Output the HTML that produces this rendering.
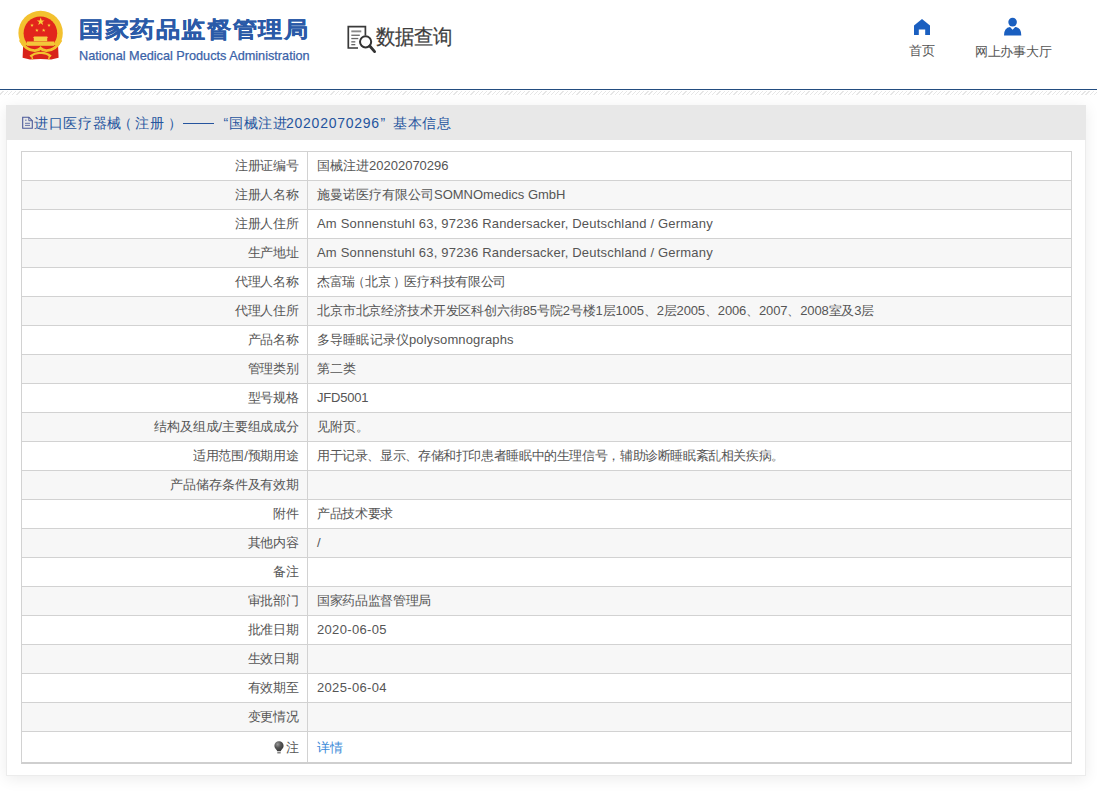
<!DOCTYPE html>
<html><head><meta charset="utf-8">
<style>
*{margin:0;padding:0;box-sizing:border-box}
html,body{width:1097px;height:792px;overflow:hidden;background:#fff;font-family:"Liberation Sans",sans-serif}
.abs{position:absolute}
#hdr{position:absolute;left:0;top:0;width:1097px;height:89px;background:#fff}
#bline{position:absolute;left:0;top:89px;width:1097px;height:1px;background:#234d80}
#hatch{position:absolute;left:0;top:91px;width:1097px;height:4px;
 background:repeating-linear-gradient(-45deg,#fff 0,#fff 1.6px,#e6e6e6 1.6px,#e6e6e6 2.5px,#fff 2.5px,#fff 3px)}
#title{position:absolute;left:79px;top:16px;font-size:24.5px;letter-spacing:0.6px;font-weight:bold;color:#2a5aa8;-webkit-text-stroke:0.3px #2a5aa8;white-space:nowrap;line-height:30px;transform:scaleY(0.91);transform-origin:0 0}
#sub{position:absolute;left:79px;top:47.5px;font-size:12.7px;color:#3a62a8;-webkit-text-stroke:0.25px #3a62a8;white-space:nowrap;line-height:16px}
#sjcx{position:absolute;left:376px;top:23px;font-size:19px;transform:scaleY(1.08);transform-origin:0 0;color:#3d3d3d;-webkit-text-stroke:0.2px #3d3d3d;white-space:nowrap;line-height:26px}
.nav{position:absolute;font-size:13px;color:#555;white-space:nowrap;line-height:16px}
#panel{position:absolute;left:6px;top:105px;width:1080px;height:671px;background:#fff;border:1px solid #ececec;box-shadow:0 3px 14px rgba(0,0,0,.08)}
#ph{position:absolute;left:-1px;top:-1px;width:1080px;height:35px;background:#e8e8e8}
.pt{position:absolute;top:114px;font-size:14px;color:#25549e;white-space:nowrap;line-height:18px}
.dg{letter-spacing:0.75px}
table{position:absolute;left:14px;top:45px;width:1051px;border-collapse:separate;border-spacing:0;border:1px solid #d2d2d2;border-bottom:2px solid #cfcfcf;font-size:13px;color:#555}
td{height:29px;border-bottom:1px solid #d2d2d2;padding:0 9px;white-space:nowrap;line-height:16px}
td.l{width:286px;text-align:right;border-right:1px solid #d2d2d2;padding-right:8px;letter-spacing:-0.15px}
tr.g td{background:#f7f7f7}
tr.last td{height:30px;border-bottom:0;padding-top:2px}
a{color:#3c8ad8;text-decoration:none}
</style></head><body>
<div id="hdr">
 <svg class="abs" style="left:0;top:0" width="80" height="70" viewBox="0 0 80 70">
  <defs><clipPath id="cu"><rect x="0" y="0" width="80" height="45"/></clipPath></defs>
  <path d="M23.2 44 L22.6 57.8 L30 59.6 L40.6 59 L51.2 59.6 L58.6 57.8 L58 44 Z" fill="#d8231b"/>
  <g clip-path="url(#cu)"><circle cx="40.6" cy="33" r="22.2" fill="#f3c12f"/></g>
  <circle cx="40.4" cy="33.2" r="16.8" fill="#e2251c"/>
  <polygon points="40.7,17.6 41.7,20.4 44.6,20.4 42.3,22.1 43.1,24.9 40.7,23.2 38.3,24.9 39.1,22.1 36.8,20.4 39.7,20.4" fill="#f7d13c"/>
  <polygon points="32,23.4 32.5,24.7 33.8,24.7 32.8,25.5 33.1,26.8 32,26 30.9,26.8 31.2,25.5 30.2,24.7 31.5,24.7" fill="#f7d13c"/>
  <polygon points="49,23.4 49.5,24.7 50.8,24.7 49.8,25.5 50.1,26.8 49,26 47.9,26.8 48.2,25.5 47.2,24.7 48.5,24.7" fill="#f7d13c"/>
  <polygon points="36.9,28.4 37.4,29.7 38.7,29.7 37.7,30.5 38,31.8 36.9,31 35.8,31.8 36.1,30.5 35.1,29.7 36.4,29.7" fill="#f7d13c"/>
  <polygon points="43.7,28.4 44.2,29.7 45.5,29.7 44.5,30.5 44.8,31.8 43.7,31 42.6,31.8 42.9,30.5 41.9,29.7 43.2,29.7" fill="#f7d13c"/>
  <path d="M32.8 37.8 L34.2 36.6 H47 L48.2 37.8 H47.2 V41.3 H33.8 V37.8 Z" fill="#f6cf43"/>
  <rect x="26.8" y="41.5" width="27.4" height="4.3" fill="#f3c63a"/>
  <path d="M20.2 40 Q26 50.8 35 50.6 Q38.6 50.4 40.6 48.2 Q42.6 50.4 46.2 50.6 Q55.2 50.8 61 40" fill="none" stroke="#f3c12f" stroke-width="2.8"/>
  <path d="M30.2 56.4 Q35.5 52.4 40.6 53 Q45.7 52.4 51 56.4" fill="none" stroke="#f3c12f" stroke-width="2.2"/>
  <path d="M31.6 55.5 L32.6 59.5 M49.6 55.5 L48.6 59.5" stroke="#f3c12f" stroke-width="1.4"/>
 </svg>
 <div id="title">国家药品监督管理局</div>
 <div id="sub">National Medical Products Administration</div>
 <svg class="abs" style="left:345px;top:24px" width="34" height="32" viewBox="0 0 34 32">
  <path d="M13 24 H3.3 V2.6 H20.4 V11.5" fill="none" stroke="#3a3a3a" stroke-width="1.7"/>
  <rect x="6.3" y="6.4" width="10" height="1.9" fill="#8a8a8a"/>
  <rect x="6.3" y="10.6" width="8.5" height="1.3" fill="#666"/>
  <rect x="6.3" y="13.9" width="7" height="1.3" fill="#666"/>
  <rect x="6.3" y="17.2" width="4" height="1.3" fill="#666"/>
  <rect x="6.3" y="20" width="4" height="1.3" fill="#666"/>
  <circle cx="20.6" cy="17.8" r="5.6" fill="none" stroke="#333" stroke-width="2"/>
  <path d="M24.8 22 L29.6 27.6" stroke="#333" stroke-width="2.8" stroke-linecap="round"/>
 </svg>
 <div id="sjcx">数据查询</div>
 <svg class="abs" style="left:913px;top:18px" width="18" height="18" viewBox="0 0 18 18">
  <path d="M9 1 L17 7.5 V17 H12.2 V11.5 H5.8 V17 H1 V7.5 Z" fill="#1a5fc0"/>
 </svg>
 <div class="nav" style="left:909px;top:43px">首页</div>
 <svg class="abs" style="left:1003px;top:17px" width="20" height="20" viewBox="0 0 20 20">
  <circle cx="9.6" cy="5.1" r="4.3" fill="#1a5fc0"/>
  <path d="M1 18.5 Q1 10.5 7 10 L9.6 12.8 L12.2 10 Q18.3 10.5 18.3 18.5 Z" fill="#1a5fc0"/>
 </svg>
 <div class="nav" style="left:975px;top:43.5px;letter-spacing:-0.3px">网上办事大厅</div>
</div>
<div id="bline"></div>
<div id="hatch"></div>

<div id="panel">
 <div id="ph">
  <svg class="abs" style="left:16px;top:11px" width="12" height="14" viewBox="0 0 12 14">
   <path d="M0.7 1.2 H6.8 L10.3 4.7 V12.3 H0.7 Z" fill="none" stroke="#4a5898" stroke-width="1.1"/>
   <path d="M6.8 1.2 V4.7 H10.3" fill="none" stroke="#4a5898" stroke-width="0.9"/>
   <path d="M3 4.2 H4.6 M3 7.3 H8 M3 9.4 H8" stroke="#55639f" stroke-width="0.9"/>
  </svg>

 </div>
 <table>
  <tr><td class="l">注册证编号</td><td>国械注进20202070296</td></tr>
  <tr class="g"><td class="l">注册人名称</td><td>施曼诺医疗有限公司SOMNOmedics GmbH</td></tr>
  <tr><td class="l">注册人住所</td><td style="letter-spacing:0.19px">Am Sonnenstuhl 63, 97236 Randersacker, Deutschland / Germany</td></tr>
  <tr class="g"><td class="l">生产地址</td><td style="letter-spacing:0.19px">Am Sonnenstuhl 63, 97236 Randersacker, Deutschland / Germany</td></tr>
  <tr><td class="l">代理人名称</td><td style="letter-spacing:-0.3px">杰富瑞<span style="margin-left:-3px">（</span>北京<span style="margin-left:2.5px">）</span><span style="margin-left:-1px">医疗科技有限公司</span></td></tr>
  <tr class="g"><td class="l">代理人住所</td><td style="letter-spacing:-0.14px">北京市北京经济技术开发区科创六街85号院2号楼1层1005、2层2005、2006、2007、2008室及3层</td></tr>
  <tr><td class="l">产品名称</td><td style="letter-spacing:0.14px">多导睡眠记录仪polysomnographs</td></tr>
  <tr class="g"><td class="l">管理类别</td><td>第二类</td></tr>
  <tr><td class="l">型号规格</td><td style="letter-spacing:-0.2px">JFD5001</td></tr>
  <tr class="g"><td class="l">结构及组成/主要组成成分</td><td>见附页。</td></tr>
  <tr><td class="l">适用范围/预期用途</td><td style="letter-spacing:-0.38px">用于记录、显示、存储和打印患者睡眠中的生理信号，辅助诊断睡眠紊乱相关疾病。</td></tr>
  <tr class="g"><td class="l">产品储存条件及有效期</td><td></td></tr>
  <tr><td class="l">附件</td><td style="letter-spacing:-0.35px">产品技术要求</td></tr>
  <tr class="g"><td class="l">其他内容</td><td>/</td></tr>
  <tr><td class="l">备注</td><td></td></tr>
  <tr class="g"><td class="l">审批部门</td><td style="letter-spacing:-0.35px">国家药品监督管理局</td></tr>
  <tr><td class="l">批准日期</td><td style="letter-spacing:0.33px">2020-06-05</td></tr>
  <tr class="g"><td class="l">生效日期</td><td></td></tr>
  <tr><td class="l">有效期至</td><td style="letter-spacing:0.33px">2025-06-04</td></tr>
  <tr class="g"><td class="l">变更情况</td><td></td></tr>
  <tr class="last"><td class="l"><svg style="vertical-align:-2px;margin-right:2px" width="10" height="13" viewBox="0 0 10 13"><defs><radialGradient id="bg1" cx="0.35" cy="0.3" r="0.7"><stop offset="0" stop-color="#9a9a9a"/><stop offset="0.5" stop-color="#555"/><stop offset="1" stop-color="#3a3a3a"/></radialGradient></defs><path d="M5 0.3 C7.6 0.3 9.6 2.3 9.6 4.8 C9.6 6.9 8.2 8 7.2 9.2 L6.8 10.3 H3.2 L2.8 9.2 C1.8 8 0.4 6.9 0.4 4.8 C0.4 2.3 2.4 0.3 5 0.3 Z" fill="url(#bg1)"/><rect x="3.3" y="11.2" width="3.4" height="1.2" fill="#666"/></svg>注</td><td><a>详情</a></td></tr>
 </table>
</div>
<div class="pt" style="left:34px;letter-spacing:0.65px">进口医疗器械</div>
<div class="pt" style="left:118px">（</div>
<div class="pt" style="left:135px;letter-spacing:1px">注册</div>
<div class="pt" style="left:168px">）</div>
<div class="abs" style="left:183px;top:123px;width:31px;height:1px;background:#25549e"></div>
<div class="pt" style="left:223.5px">“</div>
<div class="pt" style="left:229px;letter-spacing:0.5px">国械注进</div>
<div class="pt dg" style="left:286px">20202070296</div>
<div class="pt" style="left:380.5px">”</div>
<div class="pt" style="left:393px;letter-spacing:0.6px">基本信息</div>
</body></html>
